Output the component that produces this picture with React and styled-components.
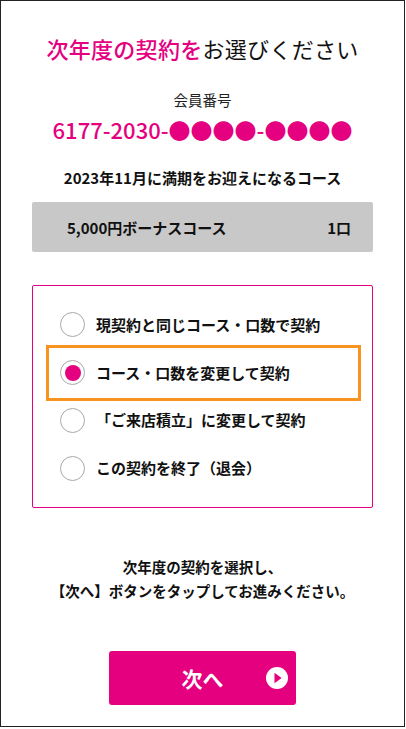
import React, { useState } from 'react'
import styled, { createGlobalStyle } from 'styled-components'

const PINK = '#e4007f'

const GlobalStyle = createGlobalStyle`
  html, body {
    margin: 0;
    padding: 0;
    background: #fff;
  }
  body {
    font-family: "Noto Sans CJK JP", "Noto Sans", sans-serif;
    color: #111;
  }
`

const options = [
  '現契約と同じコース・口数で契約',
  'コース・口数を変更して契約',
  '「ご来店積立」に変更して契約',
  'この契約を終了（退会）',
]

function App() {
  const [selected, setSelected] = useState(1)

  return (
    <Frame>
      <GlobalStyle />
      <Title>
        <Accent>次年度の契約を</Accent>お選びください
      </Title>

      <MemberLabel>会員番号</MemberLabel>
      <MemberNumber>6177-2030-●●●●-●●●●</MemberNumber>

      <CourseHeading>2023年11月に満期をお迎えになるコース</CourseHeading>
      <CourseBox>
        <span>5,000円ボーナスコース</span>
        <span>1口</span>
      </CourseBox>

      <OptionList>
        {options.map((text, i) => (
          <Option
            key={text}
            $active={i === selected}
            onClick={() => setSelected(i)}
          >
            <Radio $checked={i === selected} />
            <OptionText>{text}</OptionText>
          </Option>
        ))}
      </OptionList>

      <Note>
        次年度の契約を選択し、
        <br />
        【次へ】ボタンをタップしてお進みください。
      </Note>

      <NextButton type="button">
        <span>次へ</span>
        <ArrowIcon viewBox="0 0 22 22">
          <circle cx="11" cy="11" r="11" fill="#fff" />
          <path d="M8.5 5.8 L15.6 11 L8.5 16.2 Z" fill={PINK} />
        </ArrowIcon>
      </NextButton>
    </Frame>
  )
}

const Frame = styled.div`
  box-sizing: border-box;
  width: 405px;
  height: 727px;
  border: 1.5px solid #222;
  display: flex;
  flex-direction: column;
  align-items: center;
  padding-top: 32px;
`

const Title = styled.h1`
  margin: 0;
  font-size: 22px;
  line-height: 30px;
  font-weight: 400;
  letter-spacing: 0.3px;
  color: #111;
`

const Accent = styled.span`
  color: ${PINK};
  font-weight: 500;
`

const MemberLabel = styled.div`
  margin-top: 27px;
  font-size: 14.5px;
  line-height: 20px;
  color: #222;
`

const MemberNumber = styled.div`
  margin-top: 4px;
  font-size: 22px;
  line-height: 30px;
  font-weight: 500;
  color: ${PINK};
`

const CourseHeading = styled.div`
  margin-top: 23px;
  font-size: 15px;
  line-height: 22px;
  font-weight: 700;
`

const CourseBox = styled.div`
  box-sizing: border-box;
  margin-top: 13px;
  width: 341px;
  height: 50px;
  background: #c8c8c8;
  border-radius: 2px;
  display: flex;
  align-items: center;
  justify-content: space-between;
  padding: 0 22px 0 35px;
  font-size: 15px;
  font-weight: 700;
`

const OptionList = styled.div`
  box-sizing: border-box;
  margin-top: 33px;
  width: 341px;
  height: 223px;
  border: 1px solid ${PINK};
  border-radius: 2px;
  padding: 15px 15px 15px 17px;
  display: flex;
  flex-direction: column;
`

const Option = styled.label`
  height: 48px;
  display: flex;
  align-items: center;
  gap: 11px;
  padding: 0 10px;
  cursor: pointer;
  outline: ${(p) => (p.$active ? '3px solid #f7931e' : 'none')};
  outline-offset: 1px;
`

const Radio = styled.span`
  box-sizing: border-box;
  flex: none;
  width: 25px;
  height: 25px;
  border-radius: 50%;
  border: 1px solid #a8a8a8;
  background: #fff;
  display: flex;
  align-items: center;
  justify-content: center;

  &::after {
    content: "";
    display: ${(p) => (p.$checked ? 'block' : 'none')};
    width: 16px;
    height: 16px;
    border-radius: 50%;
    background: ${PINK};
  }
`

const OptionText = styled.span`
  font-size: 15px;
  font-weight: 700;
  line-height: 22px;
`

const Note = styled.p`
  margin: 47px 0 0;
  text-align: center;
  font-size: 14.5px;
  line-height: 24px;
  font-weight: 700;
`

const NextButton = styled.button`
  margin-top: 48px;
  position: relative;
  width: 187px;
  height: 54px;
  border: none;
  border-radius: 3px;
  background: ${PINK};
  color: #fff;
  font-family: inherit;
  font-size: 21px;
  font-weight: 700;
  display: flex;
  align-items: center;
  justify-content: center;
  cursor: pointer;
`

const ArrowIcon = styled.svg`
  position: absolute;
  right: 8px;
  top: 16px;
  width: 22px;
  height: 22px;
`

export default App
